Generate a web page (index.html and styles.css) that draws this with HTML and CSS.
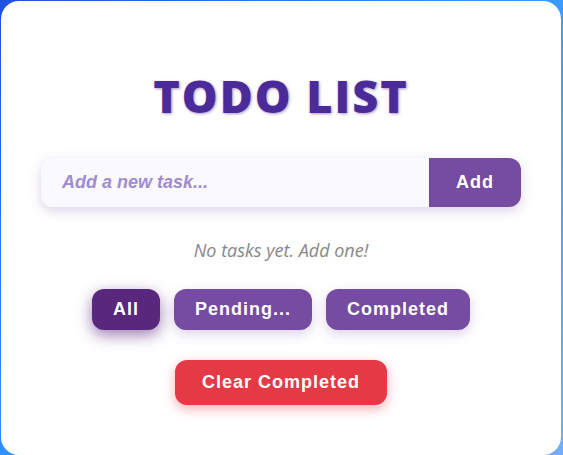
FILE: index.html
```html
<!DOCTYPE html>
<html lang="en">
<head>
<meta charset="utf-8">
<meta name="viewport" content="width=device-width, initial-scale=1">
<title>Todo List</title>
<link rel="stylesheet" href="styles.css">
</head>
<body>
<main class="card">
  <h1 class="title">TODO LIST</h1>
  <form class="task-form">
    <input class="task-input" type="text" placeholder="Add a new task..." aria-label="Add a new task">
    <button class="add-button" type="submit">Add</button>
  </form>
  <p class="empty">No tasks yet. Add one!</p>
  <div class="filters">
    <button class="filter active" type="button">All</button>
    <button class="filter" type="button">Pending...</button>
    <button class="filter" type="button">Completed</button>
  </div>
  <button class="clear" type="button">Clear Completed</button>
</main>
</body>
</html>
```
FILE: styles.css
```css
* {
  box-sizing: border-box;
}

body {
  margin: 0;
  min-height: 100vh;
  padding: 1px 2px 0 1px;
  display: flex;
  background: linear-gradient(135deg, #1f4fe0, #3399ff 50%, #74acf8);
  font-family: "Open Sans", "Noto Sans", sans-serif;
}

.card {
  flex: 1;
  min-width: 0;
  display: flex;
  flex-direction: column;
  align-items: center;
  padding: 63px 40px 50px;
  border-radius: 18px;
  background: #fff;
}

.title {
  margin: 0 0 30px;
  color: #4b2a99;
  font-size: 45px;
  font-weight: 800;
  line-height: 64px;
  letter-spacing: 2px;
  text-shadow: 1px 1px 3px rgba(118, 75, 162, 0.6);
}

.task-form {
  align-self: stretch;
  display: flex;
  height: 49px;
  border-radius: 12px;
  box-shadow: 0 4px 12px rgba(118, 75, 162, 0.25);
}

.task-input {
  flex: 1;
  min-width: 0;
  padding: 0 21px;
  border: 0;
  border-radius: 12px 0 0 12px;
  outline: 0;
  background: #faf9ff;
  color: #4b2a99;
  font: bold 18px "Liberation Sans", sans-serif;
}

.task-input::placeholder {
  color: #a18bd1;
  font-style: italic;
  opacity: 1;
}

.add-button,
.filter,
.clear {
  border: 0;
  border-radius: 12px;
  background: #764ba2;
  color: #fff;
  font: bold 18px "Liberation Sans", sans-serif;
  letter-spacing: 1px;
  cursor: pointer;
}

.add-button {
  padding: 0 27px;
  border-radius: 0 12px 12px 0;
}

.empty {
  margin: 29px 0 25px;
  color: #888;
  font-size: 18px;
  font-style: italic;
  line-height: 28px;
}

.filters {
  display: flex;
  flex-wrap: wrap;
  justify-content: center;
  gap: 14px;
  margin-bottom: 30px;
}

.filter {
  padding: 10px 21px;
  line-height: 21px;
  box-shadow: 0 4px 12px rgba(118, 75, 162, 0.25);
}

.filter.active {
  background: #5a277f;
  box-shadow: 0 5px 15px rgba(90, 39, 127, 0.6);
}

.clear {
  padding: 12px 27px;
  line-height: 21px;
  background: #e63946;
  box-shadow: 0 4px 12px rgba(230, 57, 70, 0.4);
}
```
